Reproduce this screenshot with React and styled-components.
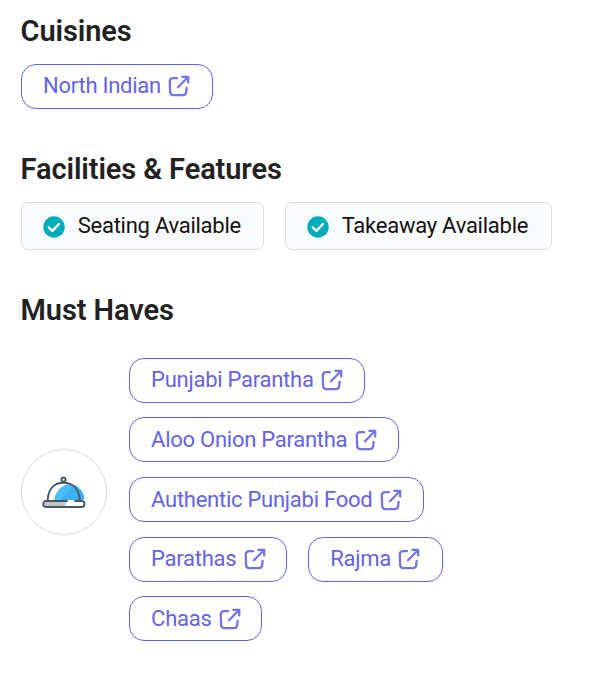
import React from 'react';
import styled, { createGlobalStyle } from 'styled-components';

const Global = createGlobalStyle`
  * { box-sizing: border-box; }
  body { margin: 0; background: #fff; font-family: Roboto, sans-serif; }
`;

const Page = styled.main`
  width: 612px;
  height: 685px;
  padding: 14px 20.6px 0;
  background: #fff;
`;

const Section = styled.section`
  height: ${(p) => p.$height}px;
`;

const Title = styled.h2`
  margin: 0 0 ${(p) => p.$gap || 0}px;
  font-size: 29px;
  line-height: 34px;
  font-weight: 600;
  letter-spacing: -0.1px;
  color: #222;
`;

const Chips = styled.div`
  display: flex;
  flex-wrap: wrap;
  gap: 14.7px 20.6px;
  max-width: ${(p) => p.$width || 570}px;
`;

const Chip = styled.a`
  display: flex;
  align-items: center;
  width: ${(p) => p.$width}px;
  height: 45px;
  padding-left: 21.4px;
  border: 1px solid #6562ea;
  border-radius: 15px;
  color: #6562ea;
  font-size: 22px;
  font-weight: 400;
  line-height: 26px;
  letter-spacing: -0.26px;
  white-space: nowrap;
`;

const LinkGlyph = styled.svg`
  flex: none;
  width: 22px;
  height: 22px;
  margin-left: 7.2px;
  fill: none;
  stroke: #7673ed;
  stroke-width: 2.3;
  stroke-linecap: round;
  stroke-linejoin: round;
`;

const Features = styled.div`
  display: flex;
  gap: 21px;
`;

const Feature = styled.div`
  display: flex;
  align-items: center;
  width: ${(p) => p.$width}px;
  height: 48px;
  padding-left: 21.6px;
  border: 1px solid #dcdee1;
  border-radius: 7px;
  background: #fafbfd;
  color: #111;
  font-size: 22px;
  font-weight: 400;
  line-height: 26px;
  letter-spacing: -0.25px;
  white-space: nowrap;
`;

const CheckGlyph = styled.svg`
  flex: none;
  width: 22px;
  height: 22px;
  margin: 2px 12.5px 0 0;
`;

const Dishes = styled.div`
  display: flex;
  align-items: center;
  gap: 22.1px;
`;

const DishBadge = styled.div`
  display: grid;
  place-items: center;
  flex: none;
  width: 86px;
  height: 86px;
  margin-top: -15px;
  border: 1px solid #dcdcdc;
  border-radius: 50%;
`;

const DishGlyph = styled.svg`
  display: block;
  width: 44px;
  height: 34px;
`;

function LinkChip({ label, width }) {
  return (
    <Chip $width={width}>
      {label}
      <LinkGlyph viewBox="0 0 22 22">
        <path d="M9 3.2H5.2Q1.8 3.2 1.8 6.6L2.1 16.8Q2.2 20.1 5.4 20.2L14.6 20.2Q18 20.2 18.2 16.9L18.6 12.8" />
        <path d="M10 12.3L19.8 2.2M14.3 1.8H20.2V7.5" />
      </LinkGlyph>
    </Chip>
  );
}

function FeatureTag({ label, width }) {
  return (
    <Feature $width={width}>
      <CheckGlyph viewBox="0 0 22 22">
        <circle cx="11" cy="11" r="10.7" fill="#00adb8" />
        <path d="M5.8 11.4L9.4 14.8L15.9 8" fill="none" stroke="#fff" strokeWidth="2.4" strokeLinecap="round" strokeLinejoin="round" />
      </CheckGlyph>
      {label}
    </Feature>
  );
}

function Cloche() {
  return (
    <DishGlyph viewBox="0 0 44 34">
      <path d="M12 25C14 16 19 10 28 9C36 10 42 16 42.5 24L40 25Z" fill="#4bbcf8" />
      <path d="M18 25L33 10Q40 15 42.5 24L40 25Z" fill="#269df0" opacity=".4" />
      <path d="M3 26.5H25L22 32H3Q1 29 3 26.5Z" fill="#c7c5c6" />
      <g fill="none" stroke="#465a66" strokeWidth="1.9" strokeLinecap="round">
        <path d="M5.7 25C6 14 12 7.8 21.5 7.8S37 14 37.8 25" />
        <circle cx="21.5" cy="4.6" r="2.1" />
        <path d="M25 26H4.2A3 3 0 0 0 4.2 32H39.5A3 3 0 0 0 39.5 26H33" />
      </g>
    </DishGlyph>
  );
}

const dishes = [
  ['Punjabi Parantha', 236.5],
  ['Aloo Onion Parantha', 270],
  ['Authentic Punjabi Food', 295],
  ['Parathas', 158.5],
  ['Rajma', 135],
  ['Chaas', 133.5],
];

export default function App() {
  return (
    <Page>
      <Global />
      <Section $height={138}>
        <Title $gap={15.5}>Cuisines</Title>
        <Chips><LinkChip label="North Indian" width={192.5} /></Chips>
      </Section>
      <Section $height={141}>
        <Title $gap={16}>Facilities &amp; Features</Title>
        <Features>
          <FeatureTag label="Seating Available" width={243} />
          <FeatureTag label="Takeaway Available" width={267} />
        </Features>
      </Section>
      <Section $height={390}>
        <Title $gap={30.7}>Must Haves</Title>
        <Dishes>
          <DishBadge><Cloche /></DishBadge>
          <Chips $width={320}>
            {dishes.map(([label, width]) => <LinkChip key={label} label={label} width={width} />)}
          </Chips>
        </Dishes>
      </Section>
    </Page>
  );
}
